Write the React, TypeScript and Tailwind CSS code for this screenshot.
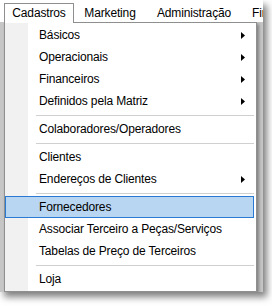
import React from "react";

const Arrow = () => (
  <svg width="4" height="7" viewBox="0 0 4 7" className="block shrink-0">
    <polygon points="0,0 4,3.5 0,7" fill="#000" />
  </svg>
);

type Item = { label: string; sub?: boolean; active?: boolean } | "sep";

const items: Item[] = [
  { label: "Básicos", sub: true },
  { label: "Operacionais", sub: true },
  { label: "Financeiros", sub: true },
  { label: "Definidos pela Matriz", sub: true },
  "sep",
  { label: "Colaboradores/Operadores" },
  "sep",
  { label: "Clientes" },
  { label: "Endereços de Clientes", sub: true },
  "sep",
  { label: "Fornecedores", active: true },
  { label: "Associar Terceiro a Peças/Serviços" },
  { label: "Tabelas de Preço de Terceiros" },
  "sep",
  { label: "Loja" },
];

export default function App() {
  return (
    <div className="w-[272px] h-[306px] bg-white font-['Liberation_Sans',Arial,sans-serif] text-[12px] text-black leading-none tracking-[-0.15px]">
      <div className="w-[263px] h-[292px] bg-[#c6c6c6] overflow-hidden shadow-[4px_5px_7px_rgba(0,0,0,0.5)]">
        {/* menu bar */}
        <div className="relative z-10 flex h-[22px] bg-white pl-[4px] whitespace-nowrap">
          <div className="shrink-0 mt-[3px] h-[20px] w-[70px] border-l border-t border-r border-[#8f8f8f] bg-white flex items-center justify-center pb-[1px]">
            Cadastros
          </div>
          <div className="shrink-0 w-[72px] flex items-center justify-center pt-[4px]">Marketing</div>
          <div className="shrink-0 w-[96px] flex items-center justify-center pt-[4px]">Administração</div>
          <div className="shrink-0 flex items-center pl-[10px] pt-[4px]">Financeiro</div>
        </div>
        {/* dropdown */}
        <div className="pl-[4px]">
          <div className="w-[253px] border border-[#8f8f8f] py-[1px] bg-[linear-gradient(to_right,#f1f1f1_23px,#ffffff_23px)] shadow-[2px_2px_3px_rgba(0,0,0,0.35)]">
            {items.map((it, i) =>
              it === "sep" ? (
                <div key={i} className="h-[6px] pt-[3px] pl-[31px] pr-[2px]">
                  <div className="h-[1px] bg-[#d0d0d0]" />
                </div>
              ) : it.active ? (
                <div
                  key={i}
                  className="h-[22px] mr-[2px] border border-[#2a7ad4] bg-[#b8d6f2] flex items-center justify-between pl-[33px] pr-[8px]"
                >
                  <span>{it.label}</span>
                  {it.sub ? <Arrow /> : null}
                </div>
              ) : (
                <div key={i} className="h-[22px] flex items-center justify-between pl-[34px] pr-[11px]">
                  <span>{it.label}</span>
                  {it.sub ? <Arrow /> : null}
                </div>
              )
            )}
          </div>
        </div>
      </div>
    </div>
  );
}
